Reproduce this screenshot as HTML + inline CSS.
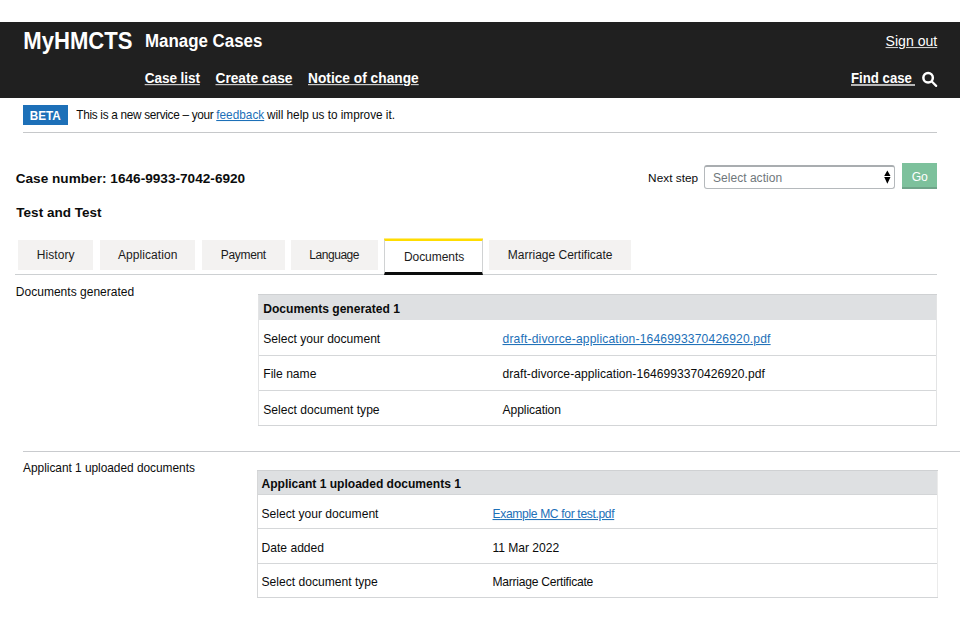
<!DOCTYPE html>
<html><head><meta charset="utf-8"><style>
html,body{margin:0;padding:0;background:#fff;width:960px;height:640px;overflow:hidden;position:relative}
body>div,body>svg{position:absolute}
.t{white-space:nowrap;font-family:"Liberation Sans",sans-serif}
</style></head><body>
<div style="left:0px;top:22px;width:960.00px;height:75.50px;background:#202020;"></div>
<div class="t" id="t0" style="left:23.30px;top:31.08px;font-size:22.1px;line-height:22.1px;font-weight:bold;color:#ffffff;transform:scaleY(1.1);transform-origin:0 18.71px;">MyHMCTS</div>
<div class="t" id="t1" style="left:145.00px;top:34.43px;font-size:16.9px;line-height:16.9px;font-weight:bold;color:#ffffff;transform:scaleY(1.09);transform-origin:0 14.31px;">Manage Cases</div>
<div class="t" id="t2" style="left:144.70px;top:72.06px;font-size:13.6px;line-height:13.6px;font-weight:bold;color:#ffffff;letter-spacing:-0.080px;transform:scaleY(1.12);transform-origin:0 11.51px;text-decoration:underline;text-underline-offset:1.3px;text-decoration-thickness:1.3px;text-decoration-color:rgba(255,255,255,0.8);">Case list</div>
<div class="t" id="t3" style="left:215.50px;top:72.08px;font-size:13.7px;line-height:13.7px;font-weight:bold;color:#ffffff;letter-spacing:0.007px;transform:scaleY(1.12);transform-origin:0 11.60px;text-decoration:underline;text-underline-offset:1.3px;text-decoration-thickness:1.3px;text-decoration-color:rgba(255,255,255,0.8);">Create case</div>
<div class="t" id="t4" style="left:308.00px;top:72.08px;font-size:13.7px;line-height:13.7px;font-weight:bold;color:#ffffff;letter-spacing:0.025px;transform:scaleY(1.12);transform-origin:0 11.60px;text-decoration:underline;text-underline-offset:1.3px;text-decoration-thickness:1.3px;text-decoration-color:rgba(255,255,255,0.8);">Notice of change</div>
<div class="t" id="t5" style="left:885.60px;top:33.61px;font-size:14.1px;line-height:14.1px;font-weight:normal;color:#ffffff;letter-spacing:-0.012px;transform:scaleY(1.03);transform-origin:0 11.94px;text-decoration:underline;text-underline-offset:0.6px;text-decoration-thickness:1.3px;text-decoration-color:rgba(255,255,255,0.8);">Sign out</div>
<div class="t" id="t6" style="left:851.00px;top:72.02px;font-size:13.2px;line-height:13.2px;font-weight:bold;color:#ffffff;letter-spacing:0.014px;transform:scaleY(1.12);transform-origin:0 11.17px;">Find case</div>
<div style="left:851px;top:84px;width:64.00px;height:2.00px;background:rgba(255,255,255,0.68);"></div>
<svg style="position:absolute;left:918px;top:68px" width="24" height="24" viewBox="918 68 24 24"><circle cx="928.1" cy="77.8" r="4.75" fill="none" stroke="#fff" stroke-width="2.5"/><line x1="931.8" y1="81.5" x2="936.2" y2="85.9" stroke="#fff" stroke-width="2.2" stroke-linecap="round"/></svg>
<div style="left:23px;top:105px;width:45.00px;height:20.00px;background:#1d70b8;"></div>
<div class="t" id="t7" style="left:29.70px;top:109.69px;font-size:11.7px;line-height:11.7px;font-weight:bold;color:#ffffff;letter-spacing:0.039px;transform:scaleY(1.1);transform-origin:0 9.90px;">BETA</div>
<div class="t" id="t8" style="left:76.30px;top:110.06px;font-size:11.8px;line-height:11.8px;font-weight:normal;color:#0b0c0c;letter-spacing:-0.303px;transform:scaleY(1.05);transform-origin:0 9.99px;">This is a new service – your</div>
<div class="t" id="t9" style="left:216.25px;top:110.06px;font-size:11.8px;line-height:11.8px;font-weight:normal;color:#1d70b8;letter-spacing:0.011px;transform:scaleY(1.05);transform-origin:0 9.99px;text-decoration:underline;text-underline-offset:1.2px;">feedback</div>
<div class="t" id="t10" style="left:267.02px;top:110.06px;font-size:11.8px;line-height:11.8px;font-weight:normal;color:#0b0c0c;letter-spacing:-0.022px;transform:scaleY(1.05);transform-origin:0 9.99px;">will help us to improve it.</div>
<div style="left:23px;top:132px;width:914.00px;height:1.00px;background:#c6c8ca;"></div>
<div class="t" id="t11" style="left:15.70px;top:171.81px;font-size:13.6px;line-height:13.6px;font-weight:bold;color:#0b0c0c;letter-spacing:0.017px;">Case number: 1646-9933-7042-6920</div>
<div class="t" id="t12" style="left:16.30px;top:206.01px;font-size:13.5px;line-height:13.5px;font-weight:bold;color:#0b0c0c;letter-spacing:0.024px;">Test and Test</div>
<div class="t" id="t13" style="left:648.10px;top:172.51px;font-size:11.8px;line-height:11.8px;font-weight:normal;color:#0b0c0c;letter-spacing:0.020px;">Next step</div>
<div style="left:704px;top:165px;width:191px;height:24px;box-sizing:border-box;border:1px solid #b5b9bc;border-top:2px solid #a9adb0;border-radius:3px;background:#fff"></div>
<div class="t" id="t14" style="left:713.00px;top:171.91px;font-size:12px;line-height:12px;font-weight:normal;color:#6f777b;letter-spacing:0.032px;">Select action</div>
<svg style="position:absolute;left:880px;top:168px" width="14" height="18" viewBox="880 168 14 18"><path d="M884.2 176.1 L887.35 170.5 L890.5 176.1 Z M884.2 177.1 L887.35 183.8 L890.5 177.1 Z" fill="#000"/></svg>
<div style="left:902px;top:163px;width:35.00px;height:24.00px;background:#7dc19c;box-shadow:0 2px 0 #6fa489;"></div>
<div class="t" id="t15" style="left:911.70px;top:171.21px;font-size:12.2px;line-height:12.2px;font-weight:normal;color:#ffffff;letter-spacing:-0.275px;">Go</div>
<div style="left:18px;top:240px;width:75.00px;height:29.50px;background:#f3f2f1;"></div>
<div class="t" id="t16" style="left:36.70px;top:249.11px;font-size:12px;line-height:12px;font-weight:normal;color:#1b1b1b;letter-spacing:0.095px;">History</div>
<div style="left:99.6px;top:240px;width:95.40px;height:29.50px;background:#f3f2f1;"></div>
<div class="t" id="t17" style="left:118.00px;top:249.11px;font-size:12px;line-height:12px;font-weight:normal;color:#1b1b1b;letter-spacing:0.060px;">Application</div>
<div style="left:201.5px;top:240px;width:83.50px;height:29.50px;background:#f3f2f1;"></div>
<div class="t" id="t18" style="left:220.70px;top:249.11px;font-size:12px;line-height:12px;font-weight:normal;color:#1b1b1b;letter-spacing:-0.309px;">Payment</div>
<div style="left:291px;top:240px;width:87.00px;height:29.50px;background:#f3f2f1;"></div>
<div class="t" id="t19" style="left:309.30px;top:249.11px;font-size:12px;line-height:12px;font-weight:normal;color:#1b1b1b;letter-spacing:-0.455px;">Language</div>
<div style="left:489px;top:240px;width:142.00px;height:29.50px;background:#f3f2f1;"></div>
<div class="t" id="t20" style="left:507.80px;top:249.11px;font-size:12px;line-height:12px;font-weight:normal;color:#1b1b1b;letter-spacing:0.000px;">Marriage Certificate</div>
<div style="left:15px;top:274px;width:922.00px;height:1.00px;background:#cdd0d2;"></div>
<div style="left:384px;top:239px;width:99px;height:36px;box-sizing:border-box;background:#fff;border-left:1px solid #d0d2d3;border-right:1px solid #d0d2d3;border-top:2px solid #ffdd00;border-bottom:3px solid #0b0c0c"></div>
<div style="left:384px;top:238px;width:99.00px;height:1.00px;background:#ffeb80;"></div>
<div class="t" id="t21" style="left:403.90px;top:251.01px;font-size:12px;line-height:12px;font-weight:normal;color:#1b1b1b;letter-spacing:-0.049px;">Documents</div>
<div class="t" id="t22" style="left:15.80px;top:286.21px;font-size:12px;line-height:12px;font-weight:normal;color:#0b0c0c;letter-spacing:0.018px;">Documents generated</div>
<div style="left:258px;top:294px;width:679.00px;height:132.00px;background:#e3e4e5;"></div>
<div style="left:259px;top:295px;width:677.00px;height:130.00px;background:#ffffff;"></div>
<div style="left:259px;top:295px;width:677.00px;height:25.00px;background:#dee0e2;"></div>
<div style="left:258px;top:294px;width:679.00px;height:1.00px;background:#cfd1d3;"></div>
<div style="left:258px;top:425px;width:679.00px;height:1.00px;background:#d3d5d7;"></div>
<div style="left:259px;top:355px;width:677.00px;height:1.00px;background:#d5d7d9;"></div>
<div style="left:259px;top:390px;width:677.00px;height:1.00px;background:#d5d7d9;"></div>
<div class="t" id="t23" style="left:263.30px;top:302.81px;font-size:12.1px;line-height:12.1px;font-weight:bold;color:#0b0c0c;letter-spacing:-0.023px;">Documents generated 1</div>
<div class="t" id="t24" style="left:263.30px;top:332.60px;font-size:12.1px;line-height:12.1px;font-weight:normal;color:#0b0c0c;letter-spacing:-0.002px;">Select your document</div>
<div class="t" id="t25" style="left:502.50px;top:332.61px;font-size:12.1px;line-height:12.1px;font-weight:normal;color:#1d70b8;letter-spacing:0.157px;transform:scaleY(1.04);transform-origin:0 10.24px;text-decoration:underline;text-underline-offset:1.2px;">draft-divorce-application-1646993370426920.pdf</div>
<div class="t" id="t26" style="left:263.30px;top:368.20px;font-size:12.1px;line-height:12.1px;font-weight:normal;color:#0b0c0c;">File name</div>
<div class="t" id="t27" style="left:502.50px;top:368.20px;font-size:12.1px;line-height:12.1px;font-weight:normal;color:#0b0c0c;letter-spacing:0.032px;">draft-divorce-application-1646993370426920.pdf</div>
<div class="t" id="t28" style="left:263.30px;top:404.20px;font-size:12.1px;line-height:12.1px;font-weight:normal;color:#0b0c0c;">Select document type</div>
<div class="t" id="t29" style="left:502.50px;top:404.20px;font-size:12.1px;line-height:12.1px;font-weight:normal;color:#0b0c0c;letter-spacing:-0.069px;">Application</div>
<div style="left:22.75px;top:451px;width:937.25px;height:1.00px;background:#c9cbce;"></div>
<div class="t" id="t30" style="left:23.10px;top:462.50px;font-size:11.9px;line-height:11.9px;font-weight:normal;color:#0b0c0c;letter-spacing:-0.027px;">Applicant 1 uploaded documents</div>
<div style="left:257px;top:470px;width:681.00px;height:128.00px;background:#d6d7d8;"></div>
<div style="left:937px;top:470px;width:1.00px;height:128.00px;background:#ebebeb;"></div>
<div style="left:258px;top:471px;width:679.00px;height:126.00px;background:#ffffff;"></div>
<div style="left:258px;top:471px;width:679.00px;height:24.00px;background:#dee0e2;"></div>
<div style="left:257px;top:470px;width:681.00px;height:1.00px;background:#cfd1d3;"></div>
<div style="left:257px;top:597px;width:681.00px;height:1.00px;background:#d3d5d7;"></div>
<div style="left:258px;top:494px;width:679.00px;height:1.00px;background:#d3d5d7;"></div>
<div style="left:258px;top:528px;width:679.00px;height:1.00px;background:#d5d7d9;"></div>
<div style="left:258px;top:563px;width:679.00px;height:1.00px;background:#d5d7d9;"></div>
<div class="t" id="t31" style="left:261.50px;top:478.01px;font-size:12.1px;line-height:12.1px;font-weight:bold;color:#0b0c0c;letter-spacing:-0.027px;">Applicant 1 uploaded documents 1</div>
<div class="t" id="t32" style="left:261.50px;top:507.81px;font-size:12.1px;line-height:12.1px;font-weight:normal;color:#0b0c0c;">Select your document</div>
<div class="t" id="t33" style="left:492.50px;top:507.82px;font-size:12.1px;line-height:12.1px;font-weight:normal;color:#1d70b8;letter-spacing:-0.346px;transform:scaleY(1.04);transform-origin:0 10.24px;text-decoration:underline;text-underline-offset:1.2px;">Example MC for test.pdf</div>
<div class="t" id="t34" style="left:261.50px;top:541.81px;font-size:12.1px;line-height:12.1px;font-weight:normal;color:#0b0c0c;">Date added</div>
<div class="t" id="t35" style="left:492.50px;top:541.81px;font-size:12.1px;line-height:12.1px;font-weight:normal;color:#0b0c0c;letter-spacing:-0.035px;">11 Mar 2022</div>
<div class="t" id="t36" style="left:261.50px;top:576.01px;font-size:12.1px;line-height:12.1px;font-weight:normal;color:#0b0c0c;">Select document type</div>
<div class="t" id="t37" style="left:492.50px;top:576.01px;font-size:12.1px;line-height:12.1px;font-weight:normal;color:#0b0c0c;letter-spacing:-0.251px;">Marriage Certificate</div>
</body></html>
